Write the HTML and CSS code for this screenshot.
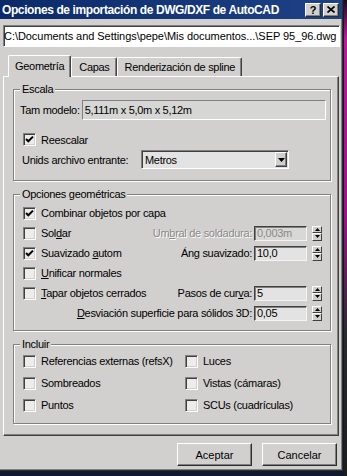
FILE: index.html
```html
<!DOCTYPE html>
<html lang="es">
  <head>
    <meta charset="UTF-8" />
    <title>Opciones de importación de DWG/DXF de AutoCAD</title>
    <link rel="stylesheet" href="styles.css">
  </head>
  <body>
    <div class="window">
      <header class="titlebar">
        <span class="title">Opciones de importación de DWG/DXF de AutoCAD</span>
        <div class="caption-buttons">
          <span class="caption-btn">?</span>
          <span class="caption-btn">
            <svg width="8" height="7" viewBox="0 0 8 7">
              <path d="M0.5 0.5L7.5 6.5M7.5 0.5L0.5 6.5" stroke="#000" stroke-width="1.7" fill="none"></path>
            </svg>
          </span>
        </div>
      </header>

      <div class="content">
        <div class="path-field">C:\Documents and Settings\pepe\Mis documentos...\SEP 95_96.dwg</div>

        <div class="tabs">
          <div class="tab active">Geometría</div>
          <div class="tab">Capas</div>
          <div class="tab">Renderización de spline</div>
        </div>

        <div class="tab-panel">
          <section class="group group-scale">
            <span class="group-label">Escala</span>
            <div class="row row-size">
              <span class="size-label">Tam modelo:</span>
              <div class="edit readonly">5,111m x 5,0m x 5,12m</div>
            </div>
            <div class="check row-rescale">
              <span class="checkbox">
                <svg width="9" height="9" viewBox="0 0 9 9"><polyline points="1,4 3.3,6.3 8,1.6" stroke="#000" stroke-width="2" fill="none"></polyline></svg>
              </span>
              <span>Reescalar</span>
            </div>
            <div class="row row-units">
              <span class="units-label">Unids archivo entrante:</span>
              <div class="combo">
                <span class="combo-value">Metros</span>
                <span class="combo-arrow">
                  <svg width="7" height="4" viewBox="0 0 7 4"><path d="M0 0H7L3.5 4Z" fill="#000"></path></svg>
                </span>
              </div>
            </div>
          </section>

          <section class="group group-geometry">
            <span class="group-label">Opciones geométricas</span>
            <div class="row geo-row">
              <div class="check">
                <span class="checkbox">
                  <svg width="9" height="9" viewBox="0 0 9 9"><polyline points="1,4 3.3,6.3 8,1.6" stroke="#000" stroke-width="2" fill="none"></polyline></svg>
                </span>
                <span>Combinar objetos por capa</span>
              </div>
            </div>
            <div class="row geo-row">
              <div class="check"><span class="checkbox"></span><span>Sol<u>d</u>ar</span></div>
              <span class="spin-label disabled">Um<u>b</u>ral de soldadura:</span>
              <div class="edit spin-edit disabled">0,003m</div>
              <div class="spinner">
                <span class="spin-btn"><svg width="5" height="3" viewBox="0 0 5 3"><path d="M0 3H5L2.5 0Z" fill="#000"></path></svg></span>
                <span class="spin-btn"><svg width="5" height="3" viewBox="0 0 5 3"><path d="M0 0H5L2.5 3Z" fill="#000"></path></svg></span>
              </div>
            </div>
            <div class="row geo-row">
              <div class="check">
                <span class="checkbox">
                  <svg width="9" height="9" viewBox="0 0 9 9"><polyline points="1,4 3.3,6.3 8,1.6" stroke="#000" stroke-width="2" fill="none"></polyline></svg>
                </span>
                <span>Suavizado <u>a</u>utom</span>
              </div>
              <span class="spin-label">Áng suavizado:</span>
              <div class="edit spin-edit">10,0</div>
              <div class="spinner">
                <span class="spin-btn"><svg width="5" height="3" viewBox="0 0 5 3"><path d="M0 3H5L2.5 0Z" fill="#000"></path></svg></span>
                <span class="spin-btn"><svg width="5" height="3" viewBox="0 0 5 3"><path d="M0 0H5L2.5 3Z" fill="#000"></path></svg></span>
              </div>
            </div>
            <div class="row geo-row">
              <div class="check"><span class="checkbox"></span><span><u>U</u>nificar normales</span></div>
            </div>
            <div class="row geo-row">
              <div class="check"><span class="checkbox"></span><span><u>T</u>apar objetos cerrados</span></div>
              <span class="spin-label">Pasos de cur<u>v</u>a:</span>
              <div class="edit spin-edit">5</div>
              <div class="spinner">
                <span class="spin-btn"><svg width="5" height="3" viewBox="0 0 5 3"><path d="M0 3H5L2.5 0Z" fill="#000"></path></svg></span>
                <span class="spin-btn"><svg width="5" height="3" viewBox="0 0 5 3"><path d="M0 0H5L2.5 3Z" fill="#000"></path></svg></span>
              </div>
            </div>
            <div class="row geo-row">
              <span class="spin-label"><u>D</u>esviación superficie para sólidos 3D:</span>
              <div class="edit spin-edit">0,05</div>
              <div class="spinner">
                <span class="spin-btn"><svg width="5" height="3" viewBox="0 0 5 3"><path d="M0 3H5L2.5 0Z" fill="#000"></path></svg></span>
                <span class="spin-btn"><svg width="5" height="3" viewBox="0 0 5 3"><path d="M0 0H5L2.5 3Z" fill="#000"></path></svg></span>
              </div>
            </div>
          </section>

          <section class="group group-include">
            <span class="group-label">Incluir</span>
            <div class="include-grid">
              <div class="check"><span class="checkbox"></span><span>Referencias externas (refsX)</span></div>
              <div class="check"><span class="checkbox"></span><span>Luces</span></div>
              <div class="check"><span class="checkbox"></span><span>Sombreados</span></div>
              <div class="check"><span class="checkbox"></span><span>Vistas (cámaras)</span></div>
              <div class="check"><span class="checkbox"></span><span>Puntos</span></div>
              <div class="check"><span class="checkbox"></span><span>SCUs (cuadrículas)</span></div>
            </div>
          </section>
        </div>

        <div class="dialog-buttons">
          <button type="button" class="push-button">Aceptar</button>
          <button type="button" class="push-button">Cancelar</button>
        </div>
      </div>
    </div>
  </body>
</html>
```

FILE: styles.css
```css
* {
  box-sizing: border-box;
}

body {
  margin: 0;
  width: 347px;
  height: 476px;
  overflow: hidden;
  font-family: 'Liberation Sans', Arial, sans-serif;
  font-size: 11px;
  letter-spacing: -0.3px;
  color: #000;
  background: linear-gradient(#1a0a18 0, #c0179e 8%, #a0128a 45%, #2a2a2a 70%, #1c1c1c 100%) right top / 3px 100% no-repeat,
    #0f1a2e;
}

.window {
  width: 343px;
  height: 471px;
  background-color: #d1d0ce;
  border-right: 1px solid #2e2e2e;
  border-bottom: 1px solid #2e2e2e;
  box-shadow: inset -1px -1px 0 #808080;
  display: flex;
  flex-direction: column;
}

.titlebar {
  height: 19px;
  display: flex;
  align-items: center;
  padding: 0 3px 0 2px;
  background: linear-gradient(90deg, #0c2a6a, #1d4285);
  color: #fff;
}

.title {
  flex: 1;
  font-size: 12px;
  font-weight: bold;
  letter-spacing: -0.4px;
  white-space: nowrap;
}

.caption-buttons {
  display: flex;
  gap: 2px;
}

.caption-btn {
  width: 16px;
  height: 14px;
  display: flex;
  align-items: center;
  justify-content: center;
  background-color: #d1d0ce;
  border: 1px solid;
  border-color: #fff #2e2e2e #2e2e2e #fff;
  box-shadow: inset -1px -1px 0 #808080;
  color: #000;
  font-size: 11px;
  font-weight: bold;
  letter-spacing: 0;
}

.content {
  flex: 1;
  display: flex;
  flex-direction: column;
  padding: 6px 2px 0 3px;
}

.path-field {
  height: 22px;
  line-height: 20px;
  background-color: #fff;
  border: 1px solid;
  border-color: #808080 #fff #fff #808080;
  box-shadow: inset 1px 1px 0 #404040;
  letter-spacing: -0.05px;
  white-space: nowrap;
  overflow: hidden;
}

.tabs {
  display: flex;
  align-items: flex-end;
  height: 21px;
  margin-top: 8px;
  padding-left: 5px;
}

.tab {
  height: 19px;
  padding: 3px 6px 0 7px;
  border-top: 1px solid #fff;
  border-left: 1px solid #fff;
  border-right: 1px solid #404040;
  box-shadow: inset -1px 0 0 #808080;
  border-radius: 2px 2px 0 0;
  white-space: nowrap;
}

.tab.active {
  position: relative;
  z-index: 1;
  height: 22px;
  margin-bottom: -1px;
  padding: 4px 6px 0 6px;
  background-color: #d1d0ce;
}

.tab-panel {
  margin-right: 1px;
  height: 360px;
  padding: 12px 7px 0 9px;
  border: 1px solid;
  border-color: #fff #404040 #404040 #fff;
  box-shadow: inset -1px -1px 0 #808080;
}

.group {
  position: relative;
  border: 1px solid #808080;
  box-shadow: inset 1px 1px 0 #fff, 1px 1px 0 #fff;
}

.group + .group {
  margin-top: 13px;
}

.group-label {
  position: absolute;
  top: -7px;
  left: 6px;
  padding: 0 2px;
  line-height: 13px;
  background-color: #d1d0ce;
}

.row {
  display: flex;
  align-items: center;
}

.check {
  display: flex;
  align-items: center;
  gap: 5px;
  white-space: nowrap;
}

.checkbox {
  width: 13px;
  height: 13px;
  flex-shrink: 0;
  display: flex;
  align-items: center;
  justify-content: center;
  background-color: #ececec;
  border: 1px solid;
  border-color: #808080 #fff #fff #808080;
  box-shadow: inset 1px 1px 0 #404040, inset -1px -1px 0 #d4d0c8;
}

.edit {
  border: 1px solid;
  border-color: #404040 #f4f4f4 #f4f4f4 #404040;
  box-shadow: inset 1px 1px 0 #808080;
  background-color: #e3e3e3;
  padding-left: 2px;
  white-space: nowrap;
}

/* Escala */
.group-scale {
  padding: 10px 4px 11px 0;
}

.row-size {
  height: 20px;
  padding-left: 6px;
  gap: 2px;
}

.edit.readonly {
  flex: 1;
  height: 20px;
  line-height: 18px;
  background-color: #d6d6d4;
  border-color: #808080 #fff #fff #808080;
  box-shadow: none;
}

.row-rescale {
  height: 13px;
  margin-top: 13px;
  padding-left: 9px;
}

.row-units {
  height: 19px;
  margin-top: 4px;
  padding-left: 8px;
}

.units-label {
  width: 119px;
}

.combo {
  width: 148px;
  height: 19px;
  display: flex;
  align-items: center;
  justify-content: space-between;
  padding: 0 1px 0 3px;
  background-color: #e3e3e3;
  border: 1px solid;
  border-color: #808080 #fff #fff #808080;
  box-shadow: inset 1px 1px 0 #404040;
}

.combo-arrow {
  width: 12px;
  height: 15px;
  display: flex;
  align-items: center;
  justify-content: center;
  background-color: #d1d0ce;
  border: 1px solid;
  border-color: #fff #404040 #404040 #fff;
  box-shadow: inset -1px -1px 0 #808080;
}

/* Opciones geométricas */
.group-geometry {
  padding: 8px 8px 7px 9px;
}

.geo-row {
  height: 20px;
}

.spin-label {
  margin-left: auto;
  margin-right: 2px;
  white-space: nowrap;
}

.spin-label.disabled {
  color: #8a8a8a;
  text-shadow: 1px 1px 0 #fff;
}

.spin-edit {
  width: 53px;
  height: 15px;
  line-height: 13px;
}

.spin-edit.disabled {
  color: #8a8a8a;
  background-color: #d8d8d6;
}

.spinner {
  width: 10px;
  height: 15px;
  margin-left: 5px;
  display: flex;
  flex-direction: column;
}

.spin-btn {
  flex: 1;
  display: flex;
  align-items: center;
  justify-content: center;
  background-color: #d1d0ce;
  border: 1px solid;
  border-color: #fff #404040 #404040 #fff;
}

/* Incluir */
.group-include {
  padding: 5px 0 7px 9px;
}

.include-grid {
  display: grid;
  grid-template-columns: 162px auto;
  grid-auto-rows: 22px;
  align-items: center;
}

.dialog-buttons {
  display: flex;
  justify-content: flex-end;
  gap: 10px;
  margin-top: 7px;
  padding-right: 3px;
}

.push-button {
  width: 75px;
  height: 23px;
  padding: 0;
  font: inherit;
  color: #000;
  background-color: #d1d0ce;
  border: 1px solid;
  border-color: #fff #2e2e2e #2e2e2e #fff;
  box-shadow: inset -1px -1px 0 #808080;
}
```
